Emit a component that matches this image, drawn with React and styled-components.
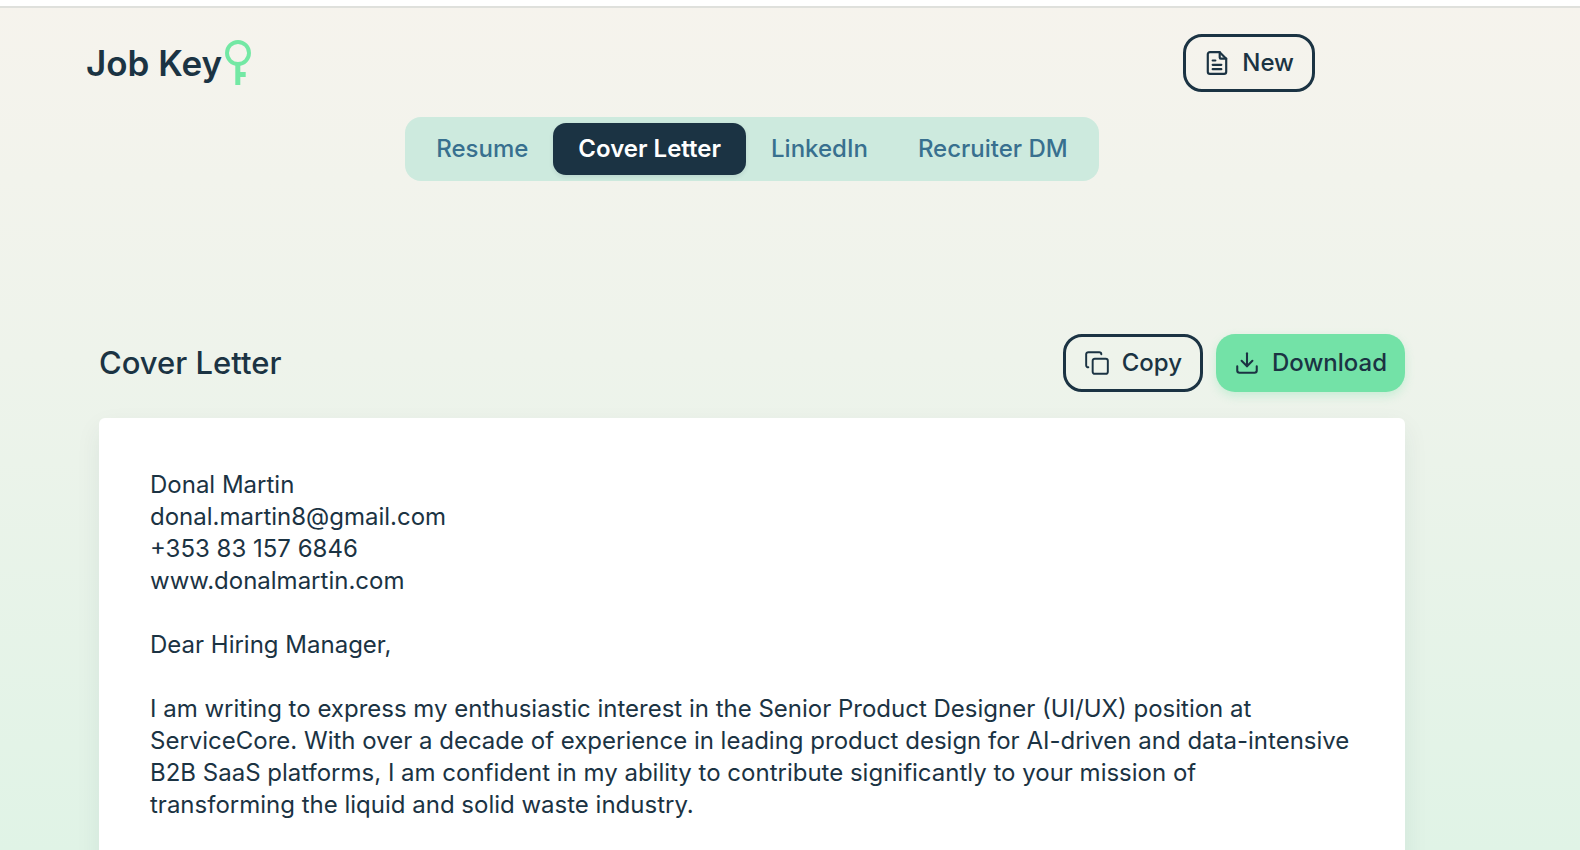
import React, { useState } from "react";
import styled, { createGlobalStyle } from "styled-components";
import { Copy, Download } from "lucide-react";

const GlobalStyle = createGlobalStyle`
  * {
    box-sizing: border-box;
  }

  body {
    margin: 0;
    color: #1b3343;
    background: #e0f3e6;
    font-family: Inter, "Liberation Sans", sans-serif;
  }
`;

const Page = styled.div`
  display: flex;
  flex-direction: column;
  height: 100vh;
  overflow: hidden;
  padding-right: 76px;
  border-top: 6px solid #ffffff;
  background: linear-gradient(180deg, #f6f3ed 0%, #eef3eb 42%, #e0f3e6 100%);
  background-origin: border-box;
`;

const TopRule = styled.div`
  flex: none;
  height: 2px;
  margin-right: -76px;
  background: #dfe0dc;
`;

const Header = styled.header`
  display: flex;
  flex: none;
  align-items: center;
  justify-content: space-between;
  padding: 26px 189px 25px 86px;
`;

const Logo = styled.a`
  display: flex;
  align-items: center;
  gap: 3px;
  color: #1b3343;
  font-size: 35px;
  font-weight: 600;
  line-height: 48px;
  text-decoration: none;
`;

const Tabs = styled.nav`
  display: flex;
  flex: none;
  align-self: center;
  padding: 6px;
  border-radius: 16px;
  background: #cdeade;
`;

const Tab = styled.button`
  padding: 10px 25px;
  border: none;
  border-radius: 13px;
  background: ${(props) => (props.$active ? "#1b3343" : "transparent")};
  box-shadow: ${(props) => (props.$active ? "0 2px 4px rgba(27, 51, 67, 0.1)" : "none")};
  color: ${(props) => (props.$active ? "#ffffff" : "#38708f")};
  font-family: inherit;
  font-size: 24px;
  font-weight: ${(props) => (props.$active ? 600 : 500)};
  line-height: 32px;
  cursor: pointer;
`;

const Button = styled.button`
  display: flex;
  align-items: center;
  gap: 12px;
  padding: ${(props) => (props.$primary ? "13px 18px" : "10px 18px")};
  border: ${(props) => (props.$primary ? "none" : "3px solid #1b3343")};
  border-radius: 19px;
  background: ${(props) => (props.$primary ? "#73e2a7" : "transparent")};
  box-shadow: ${(props) => (props.$primary ? "0 4px 10px rgba(115, 226, 167, 0.3)" : "none")};
  color: #1b3343;
  font-family: inherit;
  font-size: 24px;
  font-weight: 500;
  line-height: 32px;
  cursor: pointer;
`;

const Main = styled.main`
  display: flex;
  flex: 1;
  flex-direction: column;
  padding: 153px 99px 0;
`;

const TitleRow = styled.div`
  display: flex;
  align-items: center;
  justify-content: space-between;
  margin-bottom: 26px;
`;

const Title = styled.h1`
  margin: 0;
  font-size: 31px;
  font-weight: 500;
  line-height: 40px;
`;

const Actions = styled.div`
  display: flex;
  gap: 13px;
`;

const Letter = styled.article`
  flex: 1;
  padding: 51px;
  border-radius: 6px 6px 0 0;
  background: #ffffff;
  box-shadow: 0 10px 26px rgba(27, 51, 67, 0.07);
  font-size: 24px;
  line-height: 32px;
`;

const Paragraph = styled.p`
  margin: 0 0 32px;
  white-space: pre-line;
`;

const tabs = ["Resume", "Cover Letter", "LinkedIn", "Recruiter DM"];

const paragraphs = [
  "Donal Martin\ndonal.martin8@gmail.com\n+353 83 157 6846\nwww.donalmartin.com",
  "Dear Hiring Manager,",
  "I am writing to express my enthusiastic interest in the Senior Product Designer (UI/UX) position at ServiceCore. With over a decade of experience in leading product design for AI-driven and data-intensive B2B SaaS platforms, I am confident in my ability to contribute significantly to your mission of\ntransforming the liquid and solid waste industry.",
];

function KeyIcon() {
  return (
    <svg width="26" height="46" viewBox="0 0 26 46" fill="none" aria-hidden="true">
      <circle cx="13" cy="13" r="11" stroke="#73e8a4" strokeWidth="3.9" />
      <path d="M10.3 23.5h5v8.5h5.4v5h-5.4v8h-5z" fill="#73e8a4" />
    </svg>
  );
}

function DocumentIcon() {
  return (
    <svg
      width="26"
      height="26"
      viewBox="0 0 24 24"
      fill="none"
      stroke="currentColor"
      strokeWidth="2"
      strokeLinecap="round"
      strokeLinejoin="round"
      aria-hidden="true"
    >
      <path d="M14.5 2H5.5a2 2 0 0 0-2 2v16a2 2 0 0 0 2 2h13a2 2 0 0 0 2-2V8z" />
      <path d="M14.5 2v5a1 1 0 0 0 1 1h5M8 9.7h2.5M8 13.7h8M8 17.7h8" />
    </svg>
  );
}

function App() {
  const [activeTab, setActiveTab] = useState("Cover Letter");

  function copyLetter() {
    navigator.clipboard.writeText(paragraphs.join("\n\n"));
  }

  return (
    <>
      <GlobalStyle />
      <Page>
        <TopRule />
        <Header>
          <Logo href="#">
            Job Key
            <KeyIcon />
          </Logo>
          <Button type="button">
            <DocumentIcon />
            New
          </Button>
        </Header>
        <Tabs>
          {tabs.map((tab) => (
            <Tab key={tab} type="button" $active={tab === activeTab} onClick={() => setActiveTab(tab)}>
              {tab}
            </Tab>
          ))}
        </Tabs>
        <Main>
          <TitleRow>
            <Title>Cover Letter</Title>
            <Actions>
              <Button type="button" onClick={copyLetter}>
                <Copy size={26} strokeWidth={1.8} />
                Copy
              </Button>
              <Button type="button" $primary>
                <Download size={26} strokeWidth={1.9} />
                Download
              </Button>
            </Actions>
          </TitleRow>
          <Letter>
            {paragraphs.map((text) => (
              <Paragraph key={text}>{text}</Paragraph>
            ))}
          </Letter>
        </Main>
      </Page>
    </>
  );
}

export default App;
